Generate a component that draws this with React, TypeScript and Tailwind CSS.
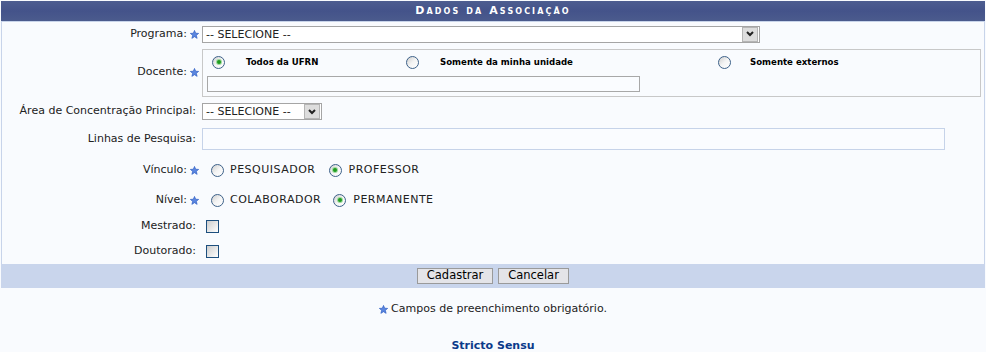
import React from "react";

function Star() {
  return (
    <svg width="9" height="9" viewBox="0 0 10 10" className="inline-block shrink-0">
      <polygon
        points="5,0.5 6.3,3.6 9.6,3.8 7,5.9 7.9,9.3 5,7.4 2.1,9.3 3,5.9 0.4,3.8 3.7,3.6"
        fill="#5b86e0"
        stroke="#2f5fc4"
        strokeWidth="0.8"
      />
    </svg>
  );
}

function Radio({ checked = false }: { checked?: boolean }) {
  return (
    <span className="flex h-[13px] w-[13px] shrink-0 items-center justify-center rounded-full border border-[#3d6189] bg-linear-to-br from-[#cfcfcf] via-[#f4f4f4] to-white">
      {checked && (
        <span className="flex h-[6px] w-[6px] items-center justify-center rounded-full bg-[#9ed89e]">
          <span className="h-[4px] w-[4px] rounded-full bg-[#1f9c1f]" />
        </span>
      )}
    </span>
  );
}

function Checkbox() {
  return <span className="block h-[13px] w-[13px] border border-[#1d4f7e] bg-linear-to-br from-[#cdcdcd] to-white" />;
}

function Select({ width }: { width: string }) {
  return (
    <div className={`flex h-[17px] items-center border border-[#a5a5a5] bg-white ${width}`}>
      <span className="flex-1 pl-[3px] leading-none">-- SELECIONE --</span>
      <span className="mr-px flex h-[15px] w-[16px] items-center justify-center border border-[#b5b5b5] bg-[#dddddd]">
        <svg width="8" height="6" viewBox="0 0 8 6">
          <path d="M1 1 L4 4 L7 1" fill="none" stroke="#222" strokeWidth="2" />
        </svg>
      </span>
    </div>
  );
}

function Row({
  label,
  required = false,
  height,
  children,
}: {
  label: string;
  required?: boolean;
  height: string;
  children: React.ReactNode;
}) {
  return (
    <div className={`flex items-center ${height}`}>
      <div className={`flex w-[198px] shrink-0 items-center justify-end gap-[3px] ${required ? "pr-px" : "pr-[4px]"}`}>
        <span>{label}</span>
        {required && <Star />}
      </div>
      <div className="flex min-w-0 flex-1 items-center pl-[2px]">{children}</div>
    </div>
  );
}

export default function App() {
  return (
    <div className="min-h-screen bg-[#f9fbfe] pt-px font-['DejaVu_Sans',Verdana,sans-serif] text-[11px] text-[#222]">
      <div className="ml-px mr-px">
        {/* Header */}
        <div className="flex h-[20px] items-center justify-center bg-linear-to-b from-[#4d5d90] via-[#44538a] to-[#4b5b8d]">
          <span className="text-[11px] font-bold tracking-[2.1px] text-white [font-variant:small-caps]">
            Dados da Associação
          </span>
        </div>

        <div className="border-x border-t border-[#c8d4ea]">
          <Row label="Programa:" required height="h-[24px]">
            <Select width="w-[558px]" />
          </Row>

          <Row label="Docente:" required height="h-[53px]">
            <div className="mr-[3px] flex h-[48px] flex-1 flex-col border border-[#c8c8c8] pl-[4px] pt-[6px]">
              <div className="flex h-[13px] items-center text-[8.6px] font-bold text-black">
                <div className="flex w-[194px] items-center">
                  <span className="ml-[5px]"><Radio checked /></span>
                  <span className="ml-[21px]">Todos da UFRN</span>
                </div>
                <div className="flex w-[311px] items-center">
                  <span className="ml-[5px]"><Radio /></span>
                  <span className="ml-[21px]">Somente da minha unidade</span>
                </div>
                <div className="flex items-center">
                  <span className="ml-[6px]"><Radio /></span>
                  <span className="ml-[19px]">Somente externos</span>
                </div>
              </div>
              <div className="mt-[7px] h-[16px] w-[433px] border border-[#a8a8a8] bg-[#fafcff]" />
            </div>
          </Row>

          <Row label="Área de Concentração Principal:" height="h-[25px]">
            <Select width="w-[120px]" />
          </Row>

          <Row label="Linhas de Pesquisa:" height="h-[30px]">
            <div className="h-[22px] w-[743px] border border-[#c6d3e9] bg-[#fafcff]" />
          </Row>

          <Row label="Vínculo:" required height="h-[32px]">
            <span className="ml-[9px]"><Radio /></span>
            <span className="ml-[6px] tracking-[0.5px]">PESQUISADOR</span>
            <span className="ml-[13px]"><Radio checked /></span>
            <span className="ml-[7px] tracking-[0.5px]">PROFESSOR</span>
          </Row>

          <Row label="Nível:" required height="h-[28px]">
            <span className="ml-[9px]"><Radio /></span>
            <span className="ml-[6px] tracking-[0.5px]">COLABORADOR</span>
            <span className="ml-[12px]"><Radio checked /></span>
            <span className="ml-[7px] tracking-[0.5px]">PERMANENTE</span>
          </Row>

          <Row label="Mestrado:" height="h-[25px]">
            <span className="ml-[4px]"><Checkbox /></span>
          </Row>

          <Row label="Doutorado:" height="h-[25px]">
            <span className="ml-[4px]"><Checkbox /></span>
          </Row>
        </div>

        {/* Footer bar */}
        <div className="flex h-[24px] items-center justify-center gap-[5px] bg-[#c9d5ec]">
          <button className="h-[16px] w-[76px] border border-[#9a9a9a] bg-[#e4e4e8] text-[11.5px] leading-none text-black">
            Cadastrar
          </button>
          <button className="h-[16px] w-[71px] border border-[#9a9a9a] bg-[#e4e4e8] text-[11.5px] leading-none text-black">
            Cancelar
          </button>
        </div>
      </div>

      <div className="mt-[13px] flex items-center justify-center gap-[3px]">
        <Star />
        <span>Campos de preenchimento obrigatório.</span>
      </div>

      <div className="mt-[21px] text-center font-bold leading-[13px] text-[#0b3a8a]">Stricto Sensu</div>
    </div>
  );
}
